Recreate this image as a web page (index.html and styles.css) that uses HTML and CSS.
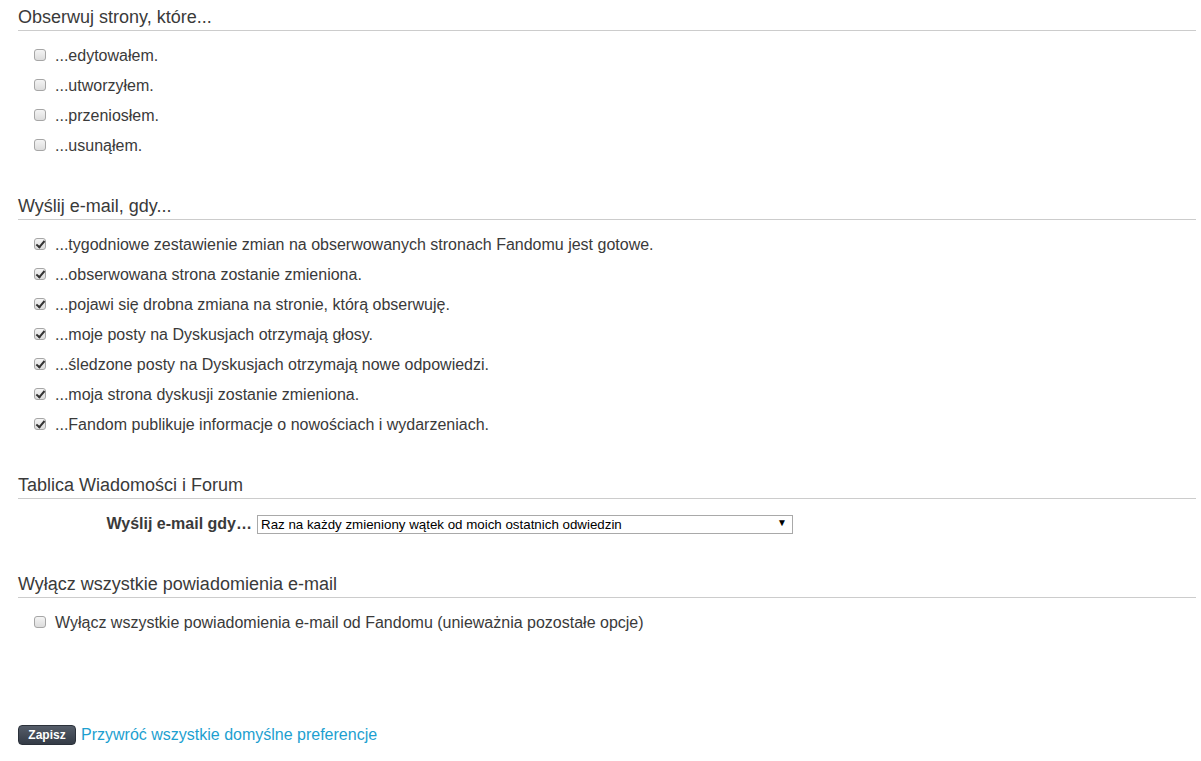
FILE: index.html
```html
<!DOCTYPE html>
<html lang="pl">
<head>
<meta charset="utf-8">
<title>Preferencje</title>
<link rel="stylesheet" href="styles.css">
</head>
<body>
<div class="page">
  <section class="section">
    <h2 class="heading">Obserwuj strony, które...</h2>
    <ul class="options">
      <li class="option"><input type="checkbox" class="cb" id="w1"><label for="w1">...edytowałem.</label></li>
      <li class="option"><input type="checkbox" class="cb" id="w2"><label for="w2">...utworzyłem.</label></li>
      <li class="option"><input type="checkbox" class="cb" id="w3"><label for="w3">...przeniosłem.</label></li>
      <li class="option"><input type="checkbox" class="cb" id="w4"><label for="w4">...usunąłem.</label></li>
    </ul>
  </section>

  <section class="section">
    <h2 class="heading">Wyślij e-mail, gdy...</h2>
    <ul class="options">
      <li class="option"><input type="checkbox" class="cb" id="e1" checked><label for="e1">...tygodniowe zestawienie zmian na obserwowanych stronach Fandomu jest gotowe.</label></li>
      <li class="option"><input type="checkbox" class="cb" id="e2" checked><label for="e2">...obserwowana strona zostanie zmieniona.</label></li>
      <li class="option"><input type="checkbox" class="cb" id="e3" checked><label for="e3">...pojawi się drobna zmiana na stronie, którą obserwuję.</label></li>
      <li class="option"><input type="checkbox" class="cb" id="e4" checked><label for="e4">...moje posty na Dyskusjach otrzymają głosy.</label></li>
      <li class="option"><input type="checkbox" class="cb" id="e5" checked><label for="e5">...śledzone posty na Dyskusjach otrzymają nowe odpowiedzi.</label></li>
      <li class="option"><input type="checkbox" class="cb" id="e6" checked><label for="e6">...moja strona dyskusji zostanie zmieniona.</label></li>
      <li class="option"><input type="checkbox" class="cb" id="e7" checked><label for="e7">...Fandom publikuje informacje o nowościach i wydarzeniach.</label></li>
    </ul>
  </section>

  <section class="section">
    <h2 class="heading">Tablica Wiadomości i Forum</h2>
    <div class="field">
      <label class="field-label" for="wall">Wyślij e-mail gdy…</label>
      <span class="select-wrap">
        <select id="wall" class="select">
          <option>Raz na każdy zmieniony wątek od moich ostatnich odwiedzin</option>
          <option>Za każdym razem, gdy wątek zostanie zmieniony</option>
          <option>Nigdy</option>
        </select>
        <span class="select-arrow">▼</span>
      </span>
    </div>
  </section>

  <section class="section">
    <h2 class="heading">Wyłącz wszystkie powiadomienia e-mail</h2>
    <ul class="options">
      <li class="option"><input type="checkbox" class="cb" id="off"><label for="off">Wyłącz wszystkie powiadomienia e-mail od Fandomu (unieważnia pozostałe opcje)</label></li>
    </ul>
  </section>

  <div class="actions">
    <button type="button" class="btn">Zapisz</button>
    <a href="#" class="link">Przywróć wszystkie domyślne preferencje</a>
  </div>
</div>
</body>
</html>
```

FILE: styles.css
```css
html, body {
  margin: 0;
  padding: 0;
  background: #ffffff;
}

body {
  font-family: "Liberation Sans", Arial, sans-serif;
  color: #3a3a3a;
}

.page {
  padding: 6px 5px 0 18px;
}

.section + .section {
  margin-top: 34px;
}

.heading {
  margin: 0;
  font-size: 18px;
  font-weight: normal;
  line-height: 22px;
  padding-bottom: 2px;
  border-bottom: 1px solid #cccccc;
  color: #3a3a3a;
}

.options {
  list-style: none;
  margin: 10px 0 0 0;
  padding: 0;
}

.option {
  height: 30px;
  display: flex;
  align-items: center;
  padding-left: 16px;
  font-size: 16px;
}

.option label {
  line-height: 30px;
}

.cb {
  -webkit-appearance: none;
  appearance: none;
  width: 12px;
  height: 12px;
  margin: -2px 9px 0 0;
  border: 1px solid #a6a6a6;
  border-radius: 3px;
  background: linear-gradient(#f4f4f4, #dcdcdc);
  position: relative;
  flex: none;
}

.cb:checked::after {
  content: "";
  position: absolute;
  left: 3px;
  top: 0px;
  width: 3px;
  height: 7px;
  border-right: 2px solid #333;
  border-bottom: 2px solid #333;
  transform: rotate(40deg);
}

.field {
  margin-top: 10px;
  height: 30px;
  display: flex;
  align-items: center;
}

.field-label {
  width: 234px;
  text-align: right;
  font-weight: bold;
  font-size: 16px;
  margin-right: 5px;
}

.select-wrap {
  position: relative;
  display: inline-block;
}

.select {
  -webkit-appearance: none;
  appearance: none;
  width: 536px;
  height: 19px;
  margin: 0;
  padding: 0 20px 0 3px;
  border: 1px solid #a9a9a9;
  border-radius: 0;
  background: #ffffff;
  font-family: "Liberation Sans", Arial, sans-serif;
  font-size: 13.33px;
  color: #000000;
  box-sizing: border-box;
}

.select-arrow {
  position: absolute;
  right: 6px;
  top: 2px;
  font-size: 10px;
  color: #000;
  pointer-events: none;
}

.actions {
  margin-top: 87px;
  display: flex;
  align-items: center;
  gap: 5px;
}

.btn {
  height: 20px;
  width: 58px;
  padding: 0;
  border: 1px solid #2b313a;
  border-radius: 4px;
  background: linear-gradient(#555d69, #343b46);
  color: #ffffff;
  font-family: "Liberation Sans", Arial, sans-serif;
  font-weight: bold;
  font-size: 12px;
}

.link {
  color: #1d9fd0;
  text-decoration: none;
  font-size: 16px;
}
```
